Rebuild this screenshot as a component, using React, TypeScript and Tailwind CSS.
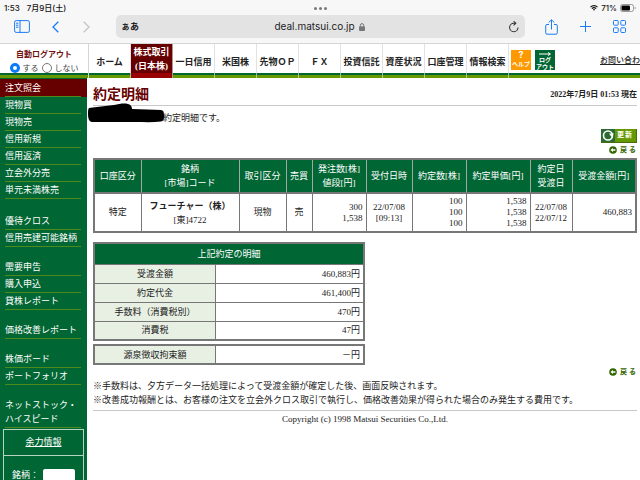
import type { ReactNode } from "react";
import clsx from "clsx";

const jp = "font-['Liberation_Serif','Noto_Sans_CJK_JP',serif]";
const ui = "font-['Inter','Noto_Sans_CJK_JP',sans-serif]";

const tabs = [
  { label: "ホーム" },
  { label: "株式取引\n(日本株)", active: true },
  { label: "一日信用" },
  { label: "米国株" },
  { label: "先物ＯＰ" },
  { label: "ＦＸ" },
  { label: "投資信託" },
  { label: "資産状況" },
  { label: "口座管理" },
  { label: "情報検索" },
];

const menuGroups = [
  ["注文照会", "現物買", "現物売", "信用新規", "信用返済", "立会外分売", "単元未満株売"],
  ["優待クロス", "信用売建可能銘柄"],
  ["需要申告", "購入申込", "貸株レポート"],
  ["価格改善レポート"],
  ["株価ボード", "ポートフォリオ"],
  ["ネットストック・\nハイスピード"],
];

const columns = [
  { label: "口座区分", width: "w-[47px]" },
  { label: "銘柄\n[市場]コード", width: "w-[98px]" },
  { label: "取引区分", width: "w-[47px]" },
  { label: "売買", width: "w-[26px]" },
  { label: "発注数[株]\n値段[円]", width: "w-[54px]" },
  { label: "受付日時", width: "w-[46px]" },
  { label: "約定数[株]", width: "w-[54px]" },
  { label: "約定単価[円]", width: "w-[64px]" },
  { label: "約定日\n受渡日", width: "w-[42px]" },
  { label: "受渡金額[円]", width: "w-[64px]" },
];

const details = [
  ["受渡金額", "460,883円"],
  ["約定代金", "461,400円"],
  ["手数料（消費税別）", "470円"],
  ["消費税", "47円"],
];

function StatusBar() {
  return (
    <div className="flex h-[15px] items-center justify-between pr-1 pl-1 text-[8px] font-medium">
      <div className="flex flex-1 gap-[7px]">
        <span>1:53</span>
        <span>7月9日(土)</span>
      </div>
      <div className="flex gap-[2px] pt-[1px]">
        <i className="size-[3px] rounded-full bg-[#777]" />
        <i className="size-[3px] rounded-full bg-[#777]" />
        <i className="size-[3px] rounded-full bg-[#777]" />
      </div>
      <div className="flex flex-1 items-center justify-end gap-[3px]">
        <svg width="8" height="6" viewBox="0 0 16 12" fill="none" stroke="#111" strokeWidth="2.4">
          <path d="M1 4.2a10 10 0 0 1 14 0M3.8 7.2a6 6 0 0 1 8.4 0" />
          <path d="M8 11.5 5.8 9.2a3.2 3.2 0 0 1 4.4 0z" fill="#111" stroke="none" />
        </svg>
        <span>71%</span>
        <svg width="16" height="8" viewBox="0 0 16 8">
          <rect x=".5" y=".5" width="13" height="7" rx="2" fill="none" stroke="#999" />
          <rect x="1.5" y="1.5" width="8.5" height="5" rx="1" fill="#000" />
          <path d="M14.7 2.7v2.6c.8-.2 1-.7 1-1.3s-.2-1.1-1-1.3z" fill="#999" />
        </svg>
      </div>
    </div>
  );
}

function Toolbar() {
  return (
    <div className="flex h-7 items-start">
      <div className="flex h-[23px] w-[116px] shrink-0 items-center text-[#1a7cf5]">
        <button aria-label="サイドバー" className="ml-[14px]">
          <svg width="16" height="13" viewBox="0 0 16 13" fill="none" stroke="currentColor">
            <rect x=".6" y=".6" width="14.8" height="11.8" rx="1.6" />
            <path d="M6 .6v11.8M2 3.2h2.4M2 5.2h2.4M2 7.2h2.4" />
          </svg>
        </button>
        <button aria-label="戻る" className="ml-[22px]">
          <svg width="7" height="12" viewBox="0 0 7 12" fill="none" stroke="currentColor" strokeWidth="1.3">
            <path d="M6.3.8 1 6l5.3 5.2" />
          </svg>
        </button>
        <button aria-label="進む" className="ml-6 text-[#c4c4c6]">
          <svg width="7" height="12" viewBox="0 0 7 12" fill="none" stroke="currentColor" strokeWidth="1.3">
            <path d="M.7.8 6 6 .7 11.2" />
          </svg>
        </button>
      </div>
      <div className="flex h-[23px] flex-1 items-center rounded-[5px] bg-[#e3e3e4] px-[5px] text-[10px] text-[#222]">
        <button className="w-10 text-left text-[9px] font-bold">ぁあ</button>
        <div className="flex flex-1 items-center justify-center gap-1 pr-[2px]">
          <span>deal.matsui.co.jp</span>
          <svg width="6" height="8" viewBox="0 0 6 8">
            <rect y="3.2" width="6" height="4.8" rx="1" fill="#777" />
            <path d="M1.3 3.6V2.3a1.7 1.7 0 0 1 3.4 0v1.3" fill="none" stroke="#777" />
          </svg>
        </div>
        <button aria-label="再読み込み" className="flex w-10 justify-end">
          <svg width="12" height="12" viewBox="0 0 12 12" fill="none" stroke="#333" strokeWidth="1.1">
            <path d="M10 6.5A4.2 4.2 0 1 1 5.8 2.3h1.4" />
            <path d="M5.6.3 7.8 2.3 5.6 4.4" />
          </svg>
        </button>
      </div>
      <div className="flex h-[23px] w-[115px] shrink-0 items-center text-[#1a7cf5]">
        <button aria-label="共有" className="ml-5">
          <svg width="13" height="16" viewBox="0 0 13 16" fill="none" stroke="currentColor">
            <path d="M4 5.5H2A1.3 1.3 0 0 0 .7 6.8v7A1.3 1.3 0 0 0 2 15.2h9a1.3 1.3 0 0 0 1.3-1.4v-7A1.3 1.3 0 0 0 11 5.5H9" />
            <path d="M6.5 10.5V1M3.7 3.5 6.5.8l2.8 2.7" />
          </svg>
        </button>
        <button aria-label="新規タブ" className="ml-[22px]">
          <svg width="11" height="11" viewBox="0 0 11 11" stroke="currentColor">
            <path d="M5.5 0v11M0 5.5h11" />
          </svg>
        </button>
        <button aria-label="タブ一覧" className="ml-[22px]">
          <svg width="13" height="13" viewBox="0 0 13 13" fill="none" stroke="currentColor">
            <rect x=".5" y=".5" width="4.7" height="4.7" rx=".8" />
            <rect x="7.8" y=".5" width="4.7" height="4.7" rx=".8" />
            <rect x=".5" y="7.8" width="4.7" height="4.7" rx=".8" />
            <rect x="7.8" y="7.8" width="4.7" height="4.7" rx=".8" />
          </svg>
        </button>
      </div>
    </div>
  );
}

function LogoutRadio({ label, checked }: { label: string; checked?: boolean }) {
  return (
    <label className="flex items-center gap-[3px]">
      <input
        type="radio"
        name="logout"
        defaultChecked={checked}
        className="size-[10px] appearance-none rounded-full border border-[#777] bg-white checked:border-[3px] checked:border-[#0a7aff]"
      />
      {label}
    </label>
  );
}

function SiteNav() {
  return (
    <header className="flex h-[35px] overflow-hidden border-t border-[#d5d5d5] bg-white bg-[linear-gradient(#006633,#006633),linear-gradient(#669900,#669900)] bg-[length:100%_2px,100%_3px] bg-[position:0_29px,0_31px] bg-no-repeat">
      <div
        role="radiogroup"
        aria-label="自動ログアウト"
        className="w-[88px] shrink-0 pt-1 text-[8px] leading-[13px] text-[#444]"
      >
        <p className="text-center font-bold text-[#701010]">自動ログアウト</p>
        <div className="flex h-[14px] items-center justify-center gap-[3px]">
          <LogoutRadio label="する" checked />
          <LogoutRadio label="しない" />
        </div>
      </div>
      <nav className="flex border-l border-[#d5d5d5]">
        {tabs.map((tab) => (
          <a
            key={tab.label}
            href="#"
            className={clsx(
              "flex h-[34px] w-[42px] justify-center border-r border-[#d5d5d5]/70 text-center text-[9px] font-bold whitespace-pre",
              tab.active
                ? "bg-[#660000] bg-[linear-gradient(#990000,#990000)] bg-[length:100%_5px] bg-[position:0_29px] bg-no-repeat pt-px leading-[14px] text-white"
                : "pt-3 leading-[12px] text-[#222]",
            )}
          >
            {tab.label}
          </a>
        ))}
      </nav>
      <div
        className={clsx(
          "flex gap-1 pt-[6px] pl-[2px] text-center font-bold whitespace-pre text-white",
          ui,
        )}
      >
        <a href="#" className="h-5 w-5 bg-[#ff9900]">
          <span className="block text-[9px] leading-[10px]">?</span>
          <span className="block text-[6px] leading-[8px]">ヘルプ</span>
        </a>
        <a href="#" className="h-5 w-5 bg-[#006633]">
          <svg width="14" height="4" viewBox="0 0 14 4" className="mx-auto mt-[2px]" stroke="#fff" fill="none">
            <path d="M1 2h11M10 .5 12.5 2 10 3.5" />
          </svg>
          <span className="block text-[6px] leading-[7px]">{"ログ\nアウト"}</span>
        </a>
      </div>
      <a
        href="#"
        className="ml-auto block pt-[11px] text-[8px] leading-[12px] font-medium whitespace-nowrap text-[#222] underline"
      >
        お問い合わ
      </a>
    </header>
  );
}

function Sidebar() {
  return (
    <aside className="flex w-[87px] shrink-0 flex-col bg-[#006633] pt-px text-[9px] text-white">
      {menuGroups.map((group, i) => (
        <ul key={group[0]} className={i === 0 ? "mb-[14px]" : "mb-3"}>
          {group.map((item) => (
            <li key={item} className={item === "注文照会" ? "bg-[#660000] pt-px" : undefined}>
              <a
                href="#"
                className="mr-[6px] ml-[5px] block border-b border-[#4d8a1c] pt-px pb-px leading-[14px] whitespace-pre"
              >
                {item}
              </a>
            </li>
          ))}
        </ul>
      ))}
      <section className="-mt-[11px] mr-[3px] ml-[3px] flex-1 border border-b-0 border-[#b5d5c0]">
        <h2 className="border-b border-[#b5d5c0] text-center leading-[25px]">
          <a href="#" className="underline">余力情報</a>
        </h2>
        <label className="flex items-center gap-1 pt-[13px] pl-2 leading-[12px]">
          銘柄：
          <input className="h-3 w-8 rounded-[2px] bg-white text-black" />
        </label>
      </section>
    </aside>
  );
}

function BackLink() {
  return (
    <a href="#" className="flex items-center justify-end gap-[3px] pr-px text-[7px] leading-[10px] font-bold text-[#336600]">
      <svg width="8" height="8" viewBox="0 0 8 8">
        <circle cx="4" cy="4" r="3.8" fill="#336600" />
        <path d="M1.4 4 4 2v1.2h2.4v1.6H4V6z" fill="#fff" />
      </svg>
      <span className="flex gap-[2px]">
        <span>戻</span>
        <span>る</span>
      </span>
    </a>
  );
}

function Cell({ right, children }: { right?: boolean; children: ReactNode }) {
  return (
    <td
      className={clsx(
        "border border-[#777] py-0 leading-[11px] whitespace-pre",
        right ? "pr-[3px] text-right" : "text-center",
      )}
    >
      {children}
    </td>
  );
}

function TradeTable() {
  return (
    <table className="w-full table-fixed border-collapse border-2 border-[#777] text-[9px] text-[#222]">
      <thead>
        <tr className="h-[34px] bg-[#006633] text-white">
          {columns.map((col) => (
            <th
              key={col.label}
              className={clsx(
                "border border-b-2 border-[#a0aaa0] border-b-[#777] p-0 leading-[14px] font-normal whitespace-pre",
                col.width,
              )}
            >
              {col.label}
            </th>
          ))}
        </tr>
      </thead>
      <tbody>
        <tr className="h-[39px]">
          <Cell>特定</Cell>
          <Cell>
            <span className="block leading-[14px] font-bold">フューチャー（株）</span>
            <span className="block leading-[14px]">[東]4722</span>
          </Cell>
          <Cell>現物</Cell>
          <Cell>売</Cell>
          <Cell right>{"300\n1,538"}</Cell>
          <Cell>{"22/07/08\n[09:13]"}</Cell>
          <Cell right>{"100\n100\n100"}</Cell>
          <Cell right>{"1,538\n1,538\n1,538"}</Cell>
          <Cell>{"22/07/08\n22/07/12"}</Cell>
          <Cell right>460,883</Cell>
        </tr>
      </tbody>
    </table>
  );
}

function DetailRow({ label, value }: { label: string; value: string }) {
  return (
    <tr className="h-[19px]">
      <th className="w-[45%] border border-[#777] bg-[#e8f0e4] p-0 font-normal">{label}</th>
      <td className="border border-[#777] py-0 pr-[3px] text-right">{value}</td>
    </tr>
  );
}

function DetailTables() {
  return (
    <div className="w-1/2 text-[9px] leading-[14px] text-[#222]">
      <table className="w-full border-collapse border-2 border-[#777]">
        <thead>
          <tr className="h-[21px] bg-[#006633] text-white">
            <th colSpan={2} className="border border-[#777] p-0 font-normal">
              上記約定の明細
            </th>
          </tr>
        </thead>
        <tbody>
          {details.map(([label, value]) => (
            <DetailRow key={label} label={label} value={value} />
          ))}
        </tbody>
      </table>
      <table className="mt-[3px] w-full border-collapse border-2 border-[#777]">
        <tbody>
          <DetailRow label="源泉徴収拘束額" value="－円" />
        </tbody>
      </table>
    </div>
  );
}

export default function App() {
  return (
    <div className={clsx("flex h-screen flex-col overflow-hidden bg-white", jp)}>
      <div className={clsx("shrink-0 bg-[#f7f7f7] text-[#111]", ui)}>
        <StatusBar />
        <Toolbar />
      </div>
      <SiteNav />
      <div className="flex min-h-0 flex-1 overflow-hidden">
        <Sidebar />
        <main className="flex-1 pt-2 pr-[5px] pl-[6px] text-[9px] text-[#222]">
          <div className="flex h-5 items-center justify-between border-b border-[#c8c8c8] pb-px">
            <h1 className="text-[14px] leading-4 font-bold text-[#660000]">約定明細</h1>
            <p className="text-[8px] font-bold">2022年7月9日 01:53 現在</p>
          </div>
          <div className="relative pt-[5px] pl-[70px] leading-[14px]">
            約定明細です。
            {/* account name blacked out */}
            <svg width="76" height="20" viewBox="0 0 76 20" className="absolute -top-[3px] -left-[5px]">
              <path
                d="M1 5C8 4 18 3 26 2c5-1 10-2 14-1 3 .5 4 3 4 5 10 .5 20 .5 29 1 3 .5 3 3 3 6s0 5-3 5.5c-8 1-17 .5-26 .5H4C1 19 0 15 0 11c0-3 0-5 1-6z"
                fill="#000"
              />
            </svg>
          </div>
          <div className="flex flex-col items-end gap-[2px] pt-1 pb-[3px]">
            <button className="flex h-[14px] w-[36px] items-center gap-[2px] border-r border-b border-[#4a6a10] bg-[#669900] text-[7px] font-bold text-white">
              <svg width="14" height="13" viewBox="0 0 14 13">
                <path d="M0 0h14v13H0z" fill="#2c6a34" />
                <circle cx="7" cy="6.5" r="4.5" fill="none" stroke="#fff" strokeWidth="1.6" />
                <path d="M8 4.5h5L10.5 8z" fill="#fff" />
              </svg>
              <span className="flex gap-px">
                <span>更</span>
                <span>新</span>
              </span>
            </button>
            <BackLink />
          </div>
          <TradeTable />
          <div className="mt-[9px]">
            <DetailTables />
          </div>
          <div className="pt-[2px]">
            <BackLink />
          </div>
          <div className="border-b border-[#c8c8c8] pt-[2px] pb-[3px] leading-[14px]">
            <p>※手数料は、夕方データ一括処理によって受渡金額が確定した後、画面反映されます。</p>
            <p>※改善成功報酬とは、お客様の注文を立会外クロス取引で執行し、価格改善効果が得られた場合のみ発生する費用です。</p>
          </div>
          <footer className="pt-[2px] text-center leading-[12px]">
            Copyright (c) 1998 Matsui Securities Co.,Ltd.
          </footer>
        </main>
      </div>
    </div>
  );
}
